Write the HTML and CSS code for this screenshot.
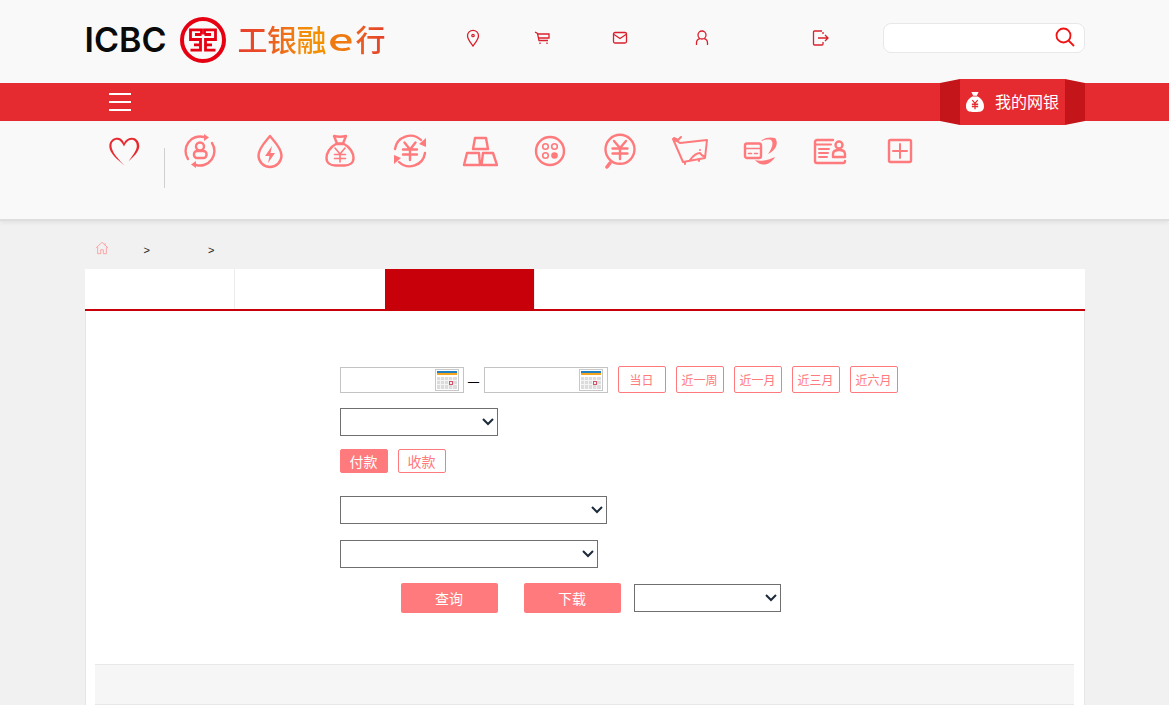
FILE: index.html
```html
<!DOCTYPE html>
<html lang="zh-CN">
<head>
<meta charset="utf-8">
<title>工银融e行</title>
<link rel="stylesheet" href="styles.css">
</head>
<body>
<header class="top wrap">
  <div class="logo">
    <span class="logo-en">ICBC</span>
    <svg class="logo-mark" viewBox="0 0 46 46"><circle cx="23" cy="23" r="21" fill="none" stroke="#e60012" stroke-width="4"/><path d="M21.500 17.500H15M21.500 17.500V12.800H10.500V22.500H20.500V33.200H10.500M14 27.800H20.500M24.500 17.500H31M24.500 17.500V12.800H35.500V22.500H25.500V33.200H35.500M32 27.800H25.500" fill="none" stroke="#e60012" stroke-width="2.800"/></svg>
    <span class="logo-cn"><span class="lc lc-1">工</span><span class="lc lc-2">银</span><span class="lc lc-3">融</span><span class="lc lc-e"><span class="lc-e-in">e</span></span><span class="lc lc-5">行</span></span>
  </div>
  <svg class="ti ti-pin" viewBox="0 0 20 20"><path d="M10 18C7.500 14.500 4.500 11.500 4.500 7.800a5.500 5.500 0 0 1 11 0C15.500 11.500 12.500 14.500 10 18Z"/><circle cx="10" cy="7.500" r="1.200"/></svg>
  <svg class="ti ti-cart" viewBox="0 0 20 20"><path d="M3 4l2.500 1.500L7 12.500h9M6 6h11v4H6.800M8 14.500v1.500M15 14.500v1.500"/></svg>
  <svg class="ti ti-mail" viewBox="0 0 20 20"><rect x="3.500" y="4.500" width="13" height="10.500" rx="1.500"/><path d="M4 6.500l6 4 6-4"/></svg>
  <svg class="ti ti-user" viewBox="0 0 20 20"><circle cx="10" cy="7" r="4"/><path d="M4.500 17v-2c0-2.500 2-4 3.500-4.300M15.500 17v-2c0-2.500-2-4-3.500-4.300"/></svg>
  <svg class="ti ti-exit" viewBox="0 0 20 20"><path d="M12 3H4.500a1 1 0 0 0-1 1v12a1 1 0 0 0 1 1H12a1 1 0 0 0 1-1v-2M13 6V4M8 10h10M15 7l3 3-3 3"/></svg>
  <div class="search">
    <input class="search-input" type="text" aria-label="搜索">
    <svg class="search-icon" viewBox="0 0 20 20"><circle cx="8.500" cy="8.500" r="7"/><path d="M13.500 13.500L19 19"/></svg>
  </div>
</header>

<div class="bar">
  <div class="wrap bar-in">
    <div class="burger"><i></i><i></i><i></i></div>
  </div>
  <div class="bank">
    <svg class="bank-side" viewBox="0 0 20 46" preserveAspectRatio="none"><path d="M0 4L20 0V46L0 42Z" fill="#c4151b"/></svg>
    <div class="bank-main">
      <svg class="bank-bag" viewBox="0 0 20 24"><path d="M6 1h8l-2 4H8ZM7 6h6c4 2 7 6 7 11 0 5-4 6-7 6H7c-3 0-7-1-7-6 0-5 3-9 7-11Z" fill="#fff"/><path d="M7 10l3 3.500 3-3.500M6.500 14.500h7M6.500 17h7M10 13.500V20" fill="none" stroke="#e62b30" stroke-width="1.400"/></svg>
      <span>我的网银</span>
    </div>
    <svg class="bank-side" viewBox="0 0 20 46" preserveAspectRatio="none"><path d="M0 0L20 4V42L0 46Z" fill="#c4151b"/></svg>
  </div>
</div>

<nav class="nav">
  <div class="wrap nav-in">
    <div class="fav">
      <svg class="heart" viewBox="0 0 32 32"><path d="M17 30C10 24 1 17 1.300 10 1.500 4 6 1.500 10 1.700 13 2 15 4 16 7 17 4 20 2 23.500 1.700 28 1.500 31.500 5 31.300 10.500 31 16 25 21 20.500 25.500 24 20 28.500 15 28.800 10.500 29 6 26 3.600 23.500 3.800 20 4 18 6.500 16 10.500 14 6.500 12 4 9.500 3.800 6 3.600 3.500 6 3.500 10 3.500 16 11 24 17 30Z" fill="#e62b30"/></svg>
    </div>
    <div class="rule"></div>
    <div class="item"><svg viewBox="0 0 36 36"><path d="M6 26A14.500 14.500 0 0 1 22 4M30 10A14.500 14.500 0 0 1 14 32"/><path class="solid" d="M22 1l5 3.500L22 8ZM14 35l-5-3.500L14 28Z"/><circle cx="18" cy="13.500" r="4"/><rect x="12" y="18" width="12.500" height="7" rx="3"/></svg></div>
    <div class="item"><svg viewBox="0 0 36 36"><path d="M18 3C14 8 6.500 15 6.500 22.500a11.500 11.500 0 0 0 23 0C29.500 15 22 8 18 3Z"/><path class="solid" d="M20 13l-7 10h4.500L16 30l7-10h-4.500Z"/></svg></div>
    <div class="item"><svg viewBox="0 0 36 36"><path d="M12 3c4 1 8 1 12 0l-3 7.500h-6ZM14 11C8 14 4.500 20 4.500 25c0 5 4 7.500 9 7.500h9c5 0 9-2.500 9-7.500 0-5-3.500-11-9.500-14Z"/><path class="thin" d="M13 15l5 6 5-6M12.500 21.500h11M12.500 25.500h11M18 21v8"/></svg></div>
    <div class="item"><svg viewBox="0 0 36 36"><path d="M3 16A15.500 15.500 0 0 1 29 7M33 20A15.500 15.500 0 0 1 7 29"/><path class="solid" d="M34 5v9l-7-3ZM2 31v-9l7 3Z"/><path d="M12.500 9.500l5.500 7 5.500-7M11 16.500h14M11 21.500h14M18 16v11"/></svg></div>
    <div class="item"><svg viewBox="0 0 36 36"><path d="M13 5H24L26 16H11ZM5 20H17L18 32H2ZM21 20H31L35 32H19.500Z"/></svg></div>
    <div class="item"><svg viewBox="0 0 36 36"><circle cx="18" cy="18" r="14"/><g class="thin"><circle cx="13.500" cy="13.500" r="2.800"/><circle cx="22.500" cy="13.500" r="2.800"/><circle cx="13.500" cy="22.500" r="2.800"/></g><circle class="solid" cx="22.500" cy="22.500" r="3.300"/></svg></div>
    <div class="item"><svg viewBox="0 0 36 36"><circle cx="18" cy="16.300" r="14.500"/><path class="heavy" d="M8 30l-3 4"/><path d="M12 8l6 7 6-7M10.500 15.500h15M10.500 20.500h15M18 15v11"/></svg></div>
    <div class="item"><svg viewBox="0 0 36 36"><path class="mid" d="M1 6c3 2 5 2 7 4l27-3-2 18-22 4ZM2 5l4 2 3-3M13 29v2M27 26v2M18 27c3-4 7-7 10-7 1 2 3 3 5 4"/><circle class="solid" cx="28" cy="17" r="1"/></svg></div>
    <div class="item"><svg viewBox="0 0 36 36"><rect x="3" y="10.500" width="16" height="14.500" rx="2"/><path class="thin" d="M3 15.500h16M6.500 20.500h3M12.500 20.500h3"/><path class="solid" d="M19 8C23 4 29 4 33 5 37 10 34 17 26 21 30 15 32 10 29 7 26 6 22 7 19 8ZM13 27C19 29 27 27 33 24 30 30 20 36 13 27Z"/></svg></div>
    <div class="item"><svg viewBox="0 0 36 36"><path d="M21 7H5a2 2 0 0 0-2 2v19c0 1.500 1 2 2 2h26c1 0 2-.5 2-2"/><path class="mid" d="M3 11.500h16M7 16h10M7 20h9M7 24h8"/><circle cx="27" cy="12" r="3.500"/><path d="M21 21c0-3 2-4 6-4s6 1 6 4v3H21Z"/></svg></div>
    <div class="item"><svg viewBox="0 0 36 36"><rect x="7" y="7" width="22" height="22" rx="1.500"/><path class="mid" d="M18 11v14M11 18h14"/></svg></div>
  </div>
</nav>

<main class="wrap">
  <div class="crumbs">
    <svg class="home" viewBox="0 0 16 16"><path d="M1 8l7-6.500L15 8M3 7v7.500h3.500V10h3v4.500H13V7M11.500 2.500V5"/></svg>
    <span class="sep sep-a">&gt;</span>
    <span class="sep sep-b">&gt;</span>
  </div>
  <div class="tabs">
    <div class="tab"></div>
    <div class="tab tab-plain"></div>
    <div class="tab tab-on"></div>
    <div class="tab-edge"></div>
  </div>
  <section class="card">
    <div class="form">
      <div class="row row-1">
        <div class="date">
          <input class="date-input" type="text" aria-label="开始日期">
          <svg class="cal" viewBox="0 0 24 22"><use href="#cal"/></svg>
        </div>
        <span class="dash">—</span>
        <div class="date">
          <input class="date-input" type="text" aria-label="结束日期">
          <svg class="cal" viewBox="0 0 24 22"><use href="#cal"/></svg>
        </div>
        <div class="quick">
          <button class="pill">当日</button>
          <button class="pill">近一周</button>
          <button class="pill">近一月</button>
          <button class="pill">近三月</button>
          <button class="pill">近六月</button>
        </div>
      </div>
      <div class="row row-2"><select class="sel sel-a"></select></div>
      <div class="row row-3">
        <button class="dir dir-on">付款</button>
        <button class="dir">收款</button>
      </div>
      <div class="row row-4"><select class="sel sel-b"></select></div>
      <div class="row row-5"><select class="sel sel-c"></select></div>
      <div class="row row-6">
        <button class="act">查询</button>
        <button class="act">下载</button>
        <select class="sel sel-d"></select>
      </div>
    </div>
    <div class="thead"></div>
  </section>
</main>

<svg class="defs" width="0" height="0">
  <symbol id="cal" viewBox="0 0 24 22">
    <rect x=".5" y=".5" width="23" height="21" fill="#fff" stroke="#c8c8c8"/>
    <rect x="2" y="2" width="20" height="2" fill="#1d7fc4"/>
    <rect x="2" y="4" width="20" height="2" fill="#f5a41c"/>
    <rect x="2" y="8" width="20" height="12" fill="#dcdcdc"/>
    <path d="M5.500 8v12M9.500 8v12M13.500 8v12M17.500 8v12M2 11.500h20M2 15.500h20" stroke="#f4f4f4" stroke-width="1"/>
    <rect x="14.500" y="12.500" width="3" height="3" fill="#eee" stroke="#d0566a"/>
  </symbol>
</svg>
</body>
</html>
```
FILE: styles.css
```css
* { box-sizing: border-box; }
html, body { margin: 0; height: 705px; overflow: hidden; }
body { background: #f1f1f1; font-family: "Noto Sans CJK SC", "Liberation Sans", sans-serif; font-size: 12px; }
.wrap { width: 1000px; margin: 0 auto; }
.defs { display: block; height: 0; }

.top { display: flex; align-items: center; height: 83px; position: relative; }
body::before { content: ""; position: absolute; left: 0; right: 0; top: 0; height: 83px; background: #f9f9f9; z-index: -1; }
.logo { display: flex; align-items: center; width: 302px; height: 46px; margin-top: -3px; }
.logo-en { font: 600 34px/46px Inter, "Liberation Sans", sans-serif; color: #0a0a0a; width: 95px; white-space: nowrap; }
.logo-mark { width: 46px; height: 46px; flex: none; }
.logo-cn { display: flex; margin: -5px 0 0 12px; font-size: 30px; font-weight: 500; line-height: 46px; white-space: nowrap; }
.lc { display: block; width: 29.500px; text-align: center; -webkit-background-clip: text; background-clip: text; color: transparent; }
.lc-1 { background-image: linear-gradient(90deg, #e7402c, #ea4f26); }
.lc-2 { background-image: linear-gradient(90deg, #ea5a22, #f08012); }
.lc-3 { background-image: linear-gradient(90deg, #f28a0a, #f39200); }
.lc-e { color: #ef7a12; }
.lc-e-in { display: block; transform: scaleX(1.500); }
.lc-5 { background-image: linear-gradient(90deg, #ec6220, #e4412a); }

.ti { width: 20px; height: 20px; flex: none; fill: none; stroke: #d9202c; stroke-width: 1.300; margin-top: -7px; }
.ti-pin { margin-left: 76px; }
.ti-cart { margin-left: 49px; }
.ti-mail { margin-left: 58px; }
.ti-user { margin-left: 62px; }
.ti-exit { margin-left: 98px; }

.search { display: flex; align-items: center; margin-left: auto; width: 202px; height: 30px; margin-top: -7px; padding-right: 9px; background: #fff; border: 1px solid #e8e8e8; border-radius: 8px; }
.search-input { flex: 1; min-width: 0; height: 100%; border: 0; background: transparent; outline: 0; }
.search-icon { width: 20px; height: 20px; margin-top: -3px; fill: none; stroke: #f01414; stroke-width: 1.800; }

.bar { position: relative; height: 38px; background: #e62b30; }
.bar-in { display: flex; align-items: center; height: 38px; padding-left: 24px; }
.burger { display: flex; flex-direction: column; gap: 6px; width: 22px; }
.burger i { display: block; height: 2px; background: #fff; }
.bank { position: absolute; z-index: 2; top: -4px; left: calc(50% + 355.500px); display: flex; width: 145px; height: 46px; }
.bank-side { width: 20px; height: 46px; flex: none; }
.bank-main { display: flex; align-items: center; width: 105px; background: #e62b30; color: #fff; font-size: 16px; padding-left: 6px; white-space: nowrap; }
.bank-main span { margin-top: -2px; }
.bank-bag { width: 18px; height: 22px; margin-right: 11px; }

.nav { height: 100px; background: #f9f9f9; border-bottom: 2px solid #dedede; box-shadow: 0 2px 4px rgba(0, 0, 0, .06); position: relative; }
.nav-in { display: flex; align-items: flex-start; }
.fav { width: 79px; padding: 15px 0 0 23px; }
.heart { display: block; width: 32px; height: 32px; }
.rule { width: 1px; height: 40px; margin-top: 27px; background: #d0d0d0; }
.item { width: 70px; padding-top: 12px; display: flex; justify-content: center; }
.item svg { width: 36px; height: 36px; fill: none; stroke: #ff7a7c; stroke-width: 2.400; stroke-linecap: round; stroke-linejoin: round; }
.item .thin { stroke-width: 1.600; }
.item .mid { stroke-width: 2; }
.item .heavy { stroke-width: 3.500; }
.item .solid { fill: #ff7a7c; stroke: none; }

.crumbs { display: flex; align-items: center; height: 48px; padding: 6px 0 0 10px; color: #222; font: 11px "Liberation Sans", sans-serif; }
.home { width: 14px; height: 14px; fill: none; stroke: #ff9c9e; stroke-width: 1; }
.sep-a { margin-left: 35px; margin-top: 3px; }
.sep-b { margin-left: 58px; margin-top: 3px; }

.tabs { display: flex; height: 42px; background: #fff; border-bottom: 2px solid #c8000a; }
.tab { width: 150px; height: 40px; border-right: 1px solid #ececec; }
.tab-plain { border-right: 0; }
.tab-on { width: 149px; height: 42px; background: #c8000a; border: 0; }
.tab-edge { width: 1px; height: 40px; background: #ececec; }

.card { height: 394px; background: #fff; border: solid #e6e6e6; border-width: 0 1px; padding: 55px 10px 0 9px; }
.form { display: flex; flex-direction: column; padding-left: 245px; height: 298px; }
.row { display: flex; align-items: center; }
.row-1 { height: 27px; margin-bottom: 15px; }
.row-2 { height: 28px; margin-bottom: 13px; }
.row-3 { height: 24px; gap: 10px; margin-bottom: 23px; }
.row-4 { height: 28px; margin-bottom: 16px; }
.row-5 { height: 28px; margin-bottom: 15px; }
.row-6 { height: 30px; padding-left: 61px; }

.date { display: flex; align-items: center; width: 124px; height: 26px; padding-right: 4px; margin-top: 1px; background: #fff; border: 1px solid #c4c4c4; }
.date-input { flex: 1; min-width: 0; height: 100%; border: 0; outline: 0; background: transparent; }
.cal { width: 24px; height: 22px; flex: none; }
.dash { width: 20px; text-align: center; font-size: 14px; color: #000; }
.quick { display: flex; gap: 10px; margin-left: 10px; }
button { font-family: inherit; padding: 0; cursor: pointer; }
.pill { width: 48px; height: 27px; background: #fff; border: 1px solid #ff7a7c; border-radius: 2px; color: #ff7a7c; font-size: 12px; }
.dir { width: 48px; height: 24px; background: #fff; border: 1px solid #ff7a7c; border-radius: 2px; color: #ff7a7c; font-size: 14px; }
.dir-on { background: #ff7a7c; color: #fff; }
.sel { display: block; height: 28px; appearance: none; -webkit-appearance: none; background: #fff url("data:image/svg+xml,%3Csvg xmlns='http://www.w3.org/2000/svg' width='12' height='8'%3E%3Cpath d='M1 1l5 5 5-5' fill='none' stroke='%231c2a3a' stroke-width='2'/%3E%3C/svg%3E") no-repeat right 3px center; border: 1px solid #6f6f6f; border-radius: 0; font-size: 12px; }
.sel-a { width: 158px; }
.sel-b { width: 267px; }
.sel-c { width: 258px; }
.sel-d { width: 147px; margin-left: 13px; }
.act { width: 97px; height: 30px; background: #ff7a7c; border: 0; border-radius: 2px; color: #fff; font-size: 14px; }
.act + .act { margin-left: 26px; }

.thead { height: 41px; background: #f6f6f6; border: solid #e8e8e8; border-width: 1px 0; }
```
